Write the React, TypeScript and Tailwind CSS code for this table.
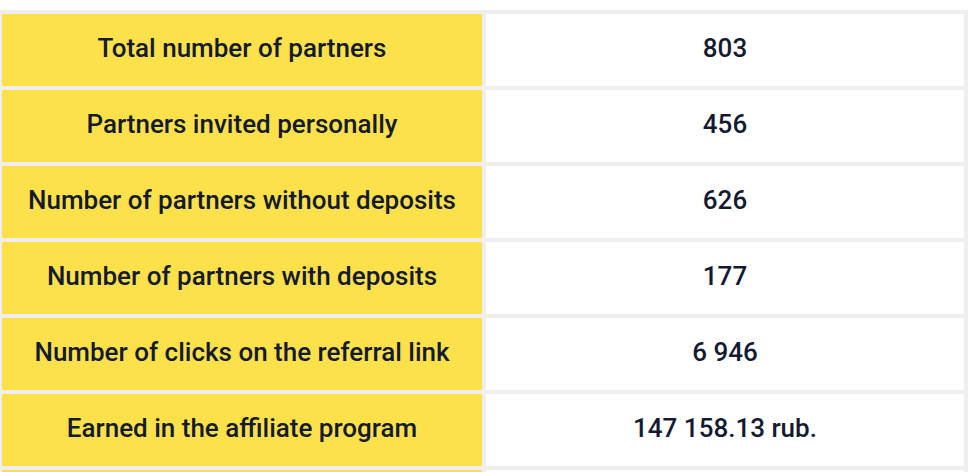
const rows = [
  ["Total number of partners", "803"],
  ["Partners invited personally", "456"],
  ["Number of partners without deposits", "626"],
  ["Number of partners with deposits", "177"],
  ["Number of clicks on the referral link", "6 946"],
  ["Earned in the affiliate program", "147 158.13 rub."],
  ["", ""],
];

export default function App() {
  return (
    <div className="h-[472px] w-[974px] overflow-hidden bg-white pt-[10px] font-['Roboto',sans-serif] text-[#141a30]">
      <div className="grid w-[968px] grid-cols-[480px_478px] gap-[4px] bg-[#efefef] pb-[4px] pl-[2px] pr-[4px] pt-[4px]">
        {rows.map(([label, value], i) => (
          <div key={i} className="contents">
            <div className="flex h-[72px] items-center justify-center bg-[#fde14a] pb-[3px] text-[26px] font-medium">
              {label}
            </div>
            <div className="flex h-[72px] items-center justify-center bg-white pb-[3px] text-[26px] font-medium">
              {value}
            </div>
          </div>
        ))}
      </div>
    </div>
  );
}
